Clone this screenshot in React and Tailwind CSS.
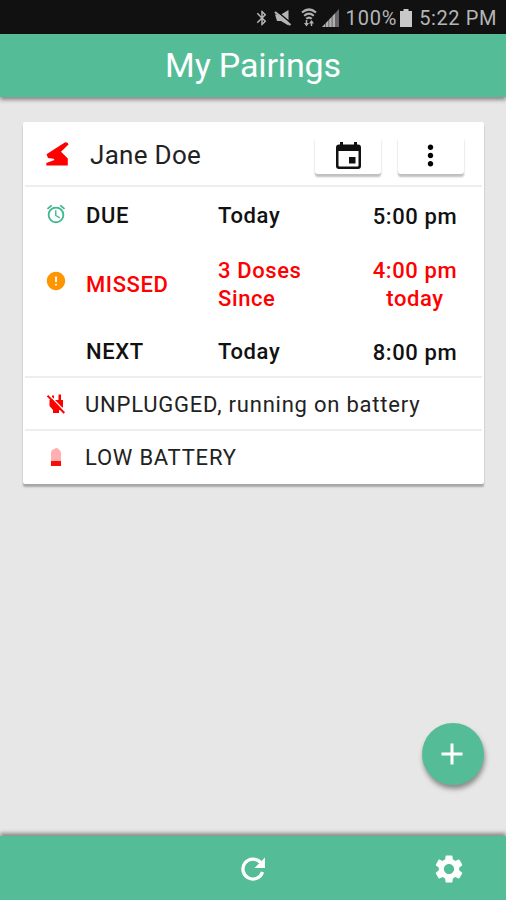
import React from "react";
import {
  MdAdd,
  MdBluetooth,
  MdError,
  MdMoreVert,
  MdOutlineAlarm,
  MdSettings,
} from "react-icons/md";

const MutedIcon = () => (
  <svg className="w-[18px] h-[18px]" viewBox="0 0 18 18">
    <path d="M1 5.500H7L14.500 1v15.500L7 12H3z" fill="#b5b5b5" />
    <path d="M2 1.500l15.500 13" stroke="#111111" strokeWidth="1.600" />
    <path d="M1 3l15.500 13" stroke="#b5b5b5" strokeWidth="2.200" />
  </svg>
);

const WifiIcon = () => (
  <svg className="w-4 h-[19px]" viewBox="0 0 16 19" fill="none" stroke="#b0b0b0" strokeWidth="2.2">
    <path d="M1 4.500Q8-1.500 15 4.500M3.200 7.800Q8 3.500 12.800 7.800M5.300 10.800Q8 8.300 10.700 10.800" />
    <path d="M5.500 12v5M10.500 18v-5" strokeWidth="1.500" />
    <path d="M3 15h5l-2.500 3.500zM8 15.500h5L10.500 12z" fill="#b0b0b0" stroke="none" />
  </svg>
);

const SignalIcon = () => (
  <svg className="w-[17px] h-[18px]" viewBox="0 0 17 18">
    <path d="M0 18L17 0v18z" fill="#666666" />
    <path d="M0 18l3-3v3zM4 14l2.300-2.500V18H4zM7.300 10.500L9.600 8v10H7.300zM10.600 7L13 4.500V18h-2.400z" fill="#b0b0b0" />
  </svg>
);

const BatteryIcon = () => (
  <svg className="w-3 h-[18px]" viewBox="0 0 12 18" fill="#c8c8c8">
    <path d="M3.500 0h5v2H12v16H0V2h3.500z" />
  </svg>
);

// Open pill dispenser next to the patient name
const DispenserIcon = () => (
  <svg className="w-[23px] h-6" viewBox="0 0 23 24" fill="#ff0000">
    <path d="M0.500 12.200L18.800 0.500Q21.500 -.5 22.500 2.500L15 9.800L21.800 16.500V23.500H0.300V21L8.500 18L7.600 16.800L2 16Z" />
  </svg>
);

const UnpluggedIcon = () => (
  <svg className="w-[18px] h-5" viewBox="0 0 18 20">
    <path d="M5 1.500h2V6h4.500V.5H14V6h2v7l-4 3.500V19H6v-3L2.500 12V6H5z" fill="#ff0000" />
    <path d="M1.800 .6l16 16.600" stroke="#ffffff" strokeWidth="1.400" />
    <path d="M.5 1.700L17.300 19" stroke="#ff0000" strokeWidth="2" />
  </svg>
);

const LowBatteryIcon = () => (
  <svg className="w-2.5 h-[18px]" viewBox="0 0 10 18">
    <path d="M0 13V4.500Q0 2.500 2 1.500T5 0t3 1.500t2 3V13z" fill="#ffb0b0" />
    <path d="M0 13h10v5H0z" fill="#f80d0d" />
  </svg>
);

const CalendarIcon = () => (
  <svg className="h-[27px] w-[25px]" viewBox="0 0 25 27">
    <path d="M4 0h3v2.500h11V0h3v2.500h1q3 0 3 3V24q0 3-3 3H3q-3 0-3-3V5.500q0-3 3-3h1zM2.500 9v14.500q0 1 1 1h18q1 0 1-1V9zM13 15h6.500v6.500H13z" fill="currentColor" fillRule="evenodd" />
  </svg>
);

const RefreshIcon = () => (
  <svg className="ml-px w-6 h-6" viewBox="0 0 24 24">
    <path d="M19.500 5.500A10 10 0 1 0 21.500 15" fill="none" stroke="currentColor" strokeWidth="3.300" />
    <path d="M24 .5V11H13.500z" fill="currentColor" />
  </svg>
);

const doses = [
  { label: "DUE", when: "Today", time: "5:00 pm", icon: <MdOutlineAlarm className="mb-0.5 w-[22px] h-[22px] text-[#3bb88c]" /> },
  { label: "MISSED", when: "3 Doses Since", time: "4:00 pm today", missed: true, icon: <MdError className="mb-1 w-[22px] h-[22px] text-[#ff9500]" /> },
  { label: "NEXT", when: "Today", time: "8:00 pm" },
];

const alerts = [
  { text: "UNPLUGGED, running on battery", icon: <UnpluggedIcon /> },
  { text: "LOW BATTERY", icon: <LowBatteryIcon /> },
];

const StatusBar = () => (
  <div className="flex h-[34px] shrink-0 items-center justify-end bg-[#111111] pr-[9px] pt-px text-[20px] text-[#b5b5b5]">
    <MdBluetooth className="w-[18px] h-[18px] mr-[3px]" />
    <MutedIcon />
    <span className="ml-[9px] mr-[5px]"><WifiIcon /></span>
    <SignalIcon />
    <span className="ml-[7px] mr-[3px] tracking-[0.8px]">100%</span>
    <BatteryIcon />
    <span className="ml-[7px] tracking-[0.6px]">5:22 PM</span>
  </div>
);

const DoseRow = ({ label, when, time, missed, icon }) => (
  <div className={`flex items-center text-[22px] leading-7 font-medium tracking-[0.6px] ${missed ? "h-20 text-[#ff0000]" : "h-14 text-[#111111]"}`}>
    <div className="w-[61px] flex justify-center">{icon}</div>
    <div className={`w-[132px] ${missed ? "pt-1" : "pt-0.5"}`}>{label}</div>
    <div className={`w-[92px] ${missed ? "pt-[3px]" : "pt-0.5"}`}>{when}</div>
    <div className="ml-[56px] w-[98px] pt-[3px] text-center">{time}</div>
  </div>
);

const PairingCard = () => (
  <section className="rounded-[2px] bg-white px-0.5 pb-0.5 shadow-[0_3px_2px_rgba(0,0,0,0.28)]">
    <header className="flex h-[65px] items-center border-b-2 border-[#eeeeee] pl-[21px] pr-[18px]">
      <DispenserIcon />
      <h2 className="ml-[21px] flex-1 pt-1 text-[26px] tracking-[0.3px] text-[#222222]">Jane Doe</h2>
      <button className="mt-[3px] mr-px flex h-[38px] w-[66px] items-center justify-center rounded-[3px] text-[#111111] shadow-[0_3px_2px_rgba(0,0,0,0.25)]">
        <CalendarIcon />
      </button>
      <button className="mt-[3px] ml-4 flex h-[38px] w-[66px] items-center justify-center rounded-[3px] pr-px text-black shadow-[0_3px_2px_rgba(0,0,0,0.25)]">
        <MdMoreVert className="w-[33px] h-[33px]" />
      </button>
    </header>
    <div className="-mb-[3px]">
      {doses.map((dose) => (
        <DoseRow key={dose.label} {...dose} />
      ))}
    </div>
    {alerts.map((alert) => (
      <div key={alert.text} className="flex h-[53px] items-center border-t-2 border-[#eeeeee] text-[22px] text-[#222222]">
        <div className="flex w-[60px] justify-center pl-px">{alert.icon}</div>
        <p className="pt-0.5 tracking-[0.78px]">{alert.text}</p>
      </div>
    ))}
  </section>
);

export default function App() {
  return (
    <div className="relative flex h-[900px] w-[506px] flex-col overflow-hidden bg-[#e7e7e7] font-['Roboto',sans-serif]">
      <StatusBar />
      <div className="relative flex h-[63px] shrink-0 items-center justify-center bg-[#54bd98] shadow-[0_3px_4px_rgba(0,0,0,0.4)]">
        <h1 className="text-[34px] tracking-[-0.15px] text-white">My Pairings</h1>
      </div>
      <main className="flex-1 px-[23px] pt-[25px] pr-[22px]">
        <PairingCard />
      </main>
      <button className="absolute right-[22px] bottom-[115px] flex h-[62px] w-[62px] items-center justify-center rounded-full bg-[#54bd98] pr-0.5 text-white shadow-[1px_4px_5px_rgba(0,0,0,0.4)]">
        <MdAdd className="w-9 h-9" />
      </button>
      <nav className="grid h-16 grid-cols-3 items-center bg-[#54bd98] pt-0.5 text-white shadow-[0_-3px_4px_rgba(0,0,0,0.4)]">
        <span />
        <button className="flex justify-center"><RefreshIcon /></button>
        <button className="flex justify-end pr-10"><MdSettings className="w-[34px] h-[34px]" /></button>
      </nav>
    </div>
  );
}
